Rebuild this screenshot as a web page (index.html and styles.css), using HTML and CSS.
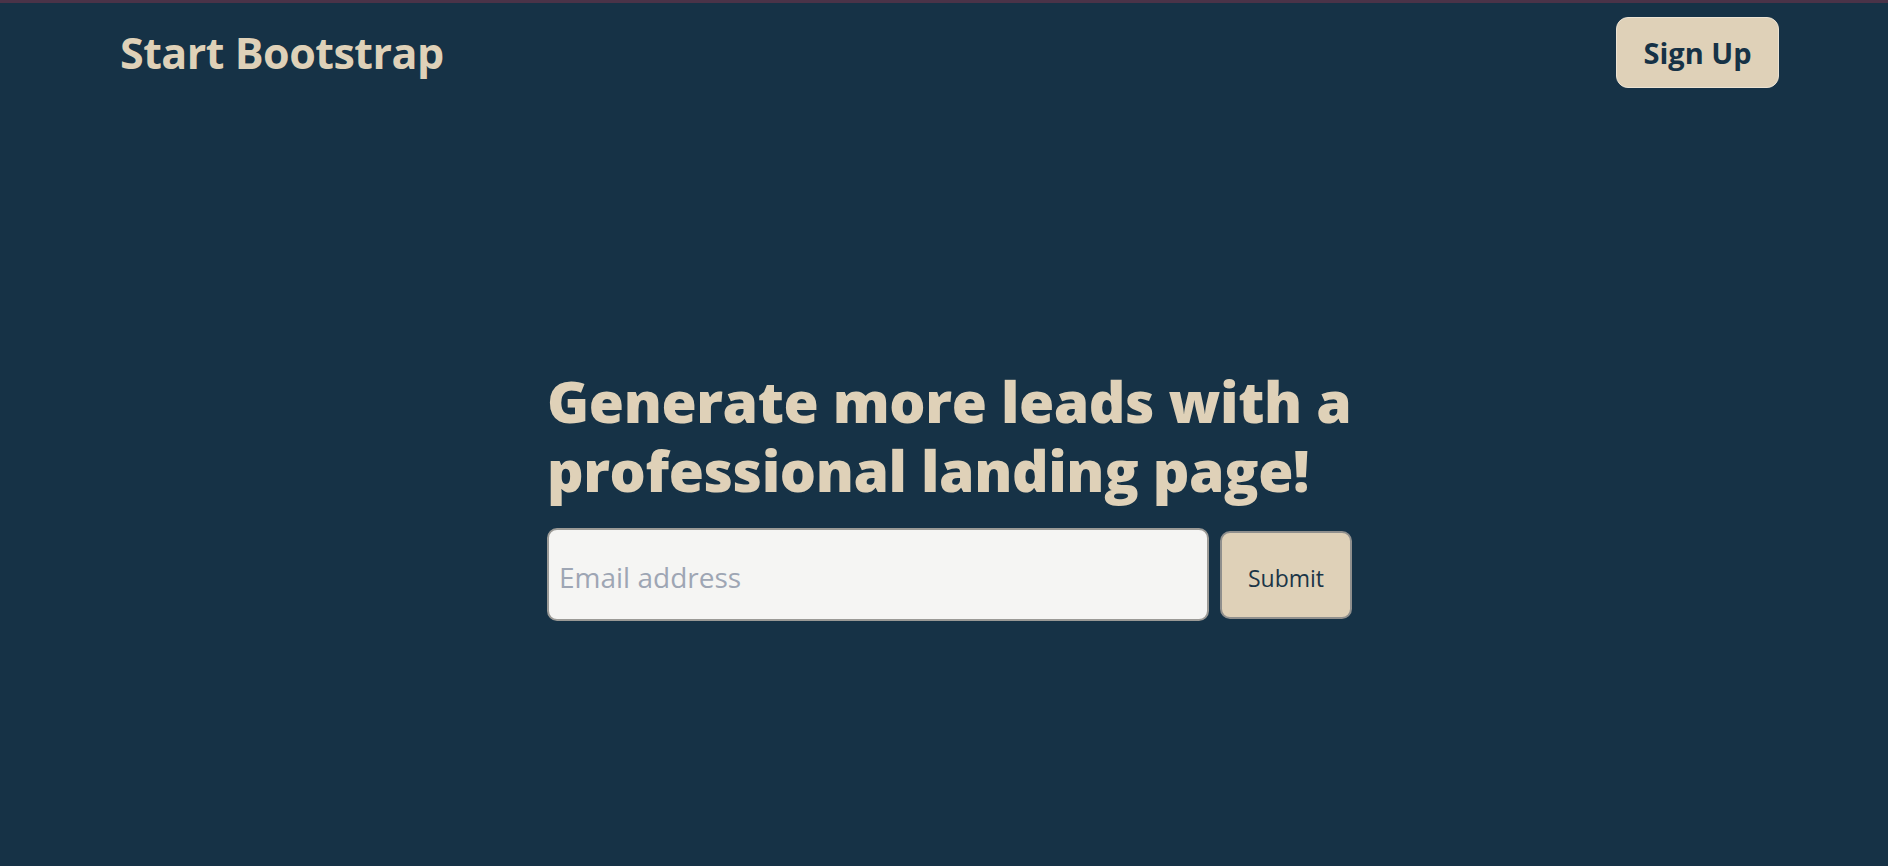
FILE: index.html
```html
<!DOCTYPE html>
<html lang="en">
<head>
<meta charset="utf-8">
<title>Start Bootstrap</title>
<link rel="stylesheet" href="styles.css">
</head>
<body>
<nav class="navbar">
  <a class="brand" href="#">Start Bootstrap</a>
  <a class="btn-signup" href="#">Sign Up</a>
</nav>
<main class="hero">
  <div class="hero-inner">
    <h1 class="hero-title">Generate more leads with a professional landing page!</h1>
    <form class="signup-form">
      <input class="email-input" type="email" placeholder="Email address">
      <button class="btn-submit" type="button">Submit</button>
    </form>
  </div>
</main>
</body>
</html>
```
FILE: styles.css
```css
html, body {
  margin: 0;
  padding: 0;
}
body {
  background: #163246;
  border-top: 3px solid #4a3348;
  min-height: 863px;
  font-family: "Open Sans", "Noto Sans", sans-serif;
  color: #dfd1b8;
}
.navbar {
  display: flex;
  justify-content: space-between;
  align-items: center;
  padding: 14px 109px 0 120px;
}
.brand {
  font-size: 43px;
  font-weight: 700;
  color: #dfd1b8;
  text-decoration: none;
  letter-spacing: -0.5px;
}
.btn-signup {
  display: inline-flex;
  align-items: center;
  justify-content: center;
  box-sizing: border-box;
  width: 163px;
  height: 71px;
  background: #dfd1b8;
  border: 1px solid #ece3d3;
  border-radius: 12px;
  color: #163246;
  font-size: 29px;
  font-weight: 700;
  text-decoration: none;
}
.hero {
  display: flex;
  justify-content: center;
  padding-left: 11px;
  padding-top: 279px;
}
.hero-inner {
  width: 805px;
}
.hero-title {
  margin: 0 -20px 23px 0;
  font-size: 57px;
  font-weight: 800;
  line-height: 69px;
  letter-spacing: -0.4px;
  color: #dfd1b8;
}
.signup-form {
  display: flex;
  align-items: center;
  gap: 11px;
}
.email-input {
  box-sizing: border-box;
  width: 662px;
  height: 93px;
  padding: 4px 10px 0 10px;
  background: #f5f5f3;
  border: 2px solid #9b9a96;
  border-radius: 10px;
  font-family: "Open Sans", "Noto Sans", sans-serif;
  font-size: 28px;
  color: #333;
  outline: none;
}
.email-input::placeholder {
  color: #9ea6b4;
}
.btn-submit {
  box-sizing: border-box;
  width: 132px;
  height: 88px;
  padding: 6px 0 0 0;
  background: #dfd1b8;
  border: 2px solid #8f8f8d;
  border-radius: 10px;
  color: #1b3547;
  font-family: "Open Sans", "Noto Sans", sans-serif;
  font-size: 23px;
  cursor: pointer;
}
```
